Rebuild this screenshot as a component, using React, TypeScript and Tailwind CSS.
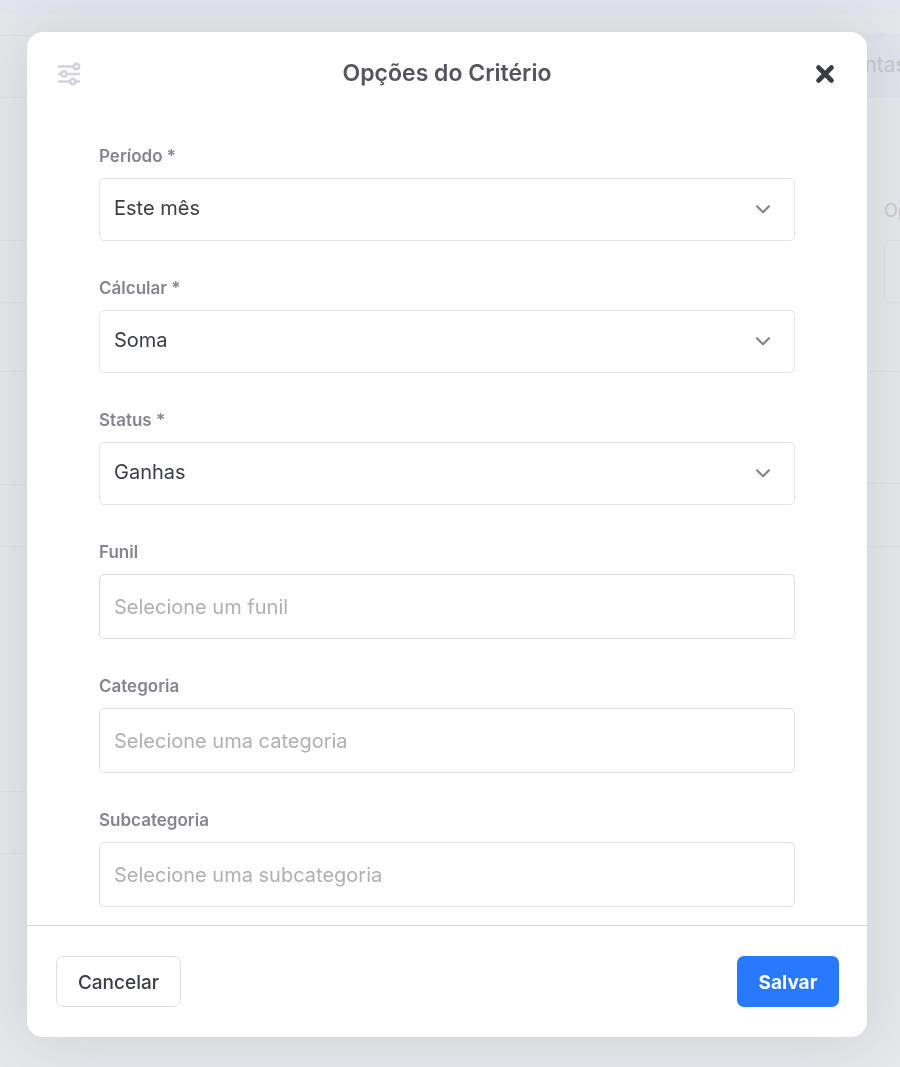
import { useState } from "react";
import type { ReactNode } from "react";

interface FieldProps {
  id: string;
  label: string;
  children: ReactNode;
}

interface SelectFieldProps {
  id: string;
  label: string;
  options: string[];
}

interface TextFieldProps {
  id: string;
  label: string;
  placeholder: string;
}

function Field({ id, label, children }: FieldProps) {
  return (
    <div className="flex flex-col gap-[10px]">
      <label htmlFor={id} className="text-[17px] leading-6 font-semibold text-[#858590]">
        {label}
      </label>
      {children}
    </div>
  );
}

function SelectField({ id, label, options }: SelectFieldProps) {
  const [value, setValue] = useState(options[0]);

  return (
    <Field id={id} label={label}>
      <div className="grid items-center">
        <select
          id={id}
          value={value}
          onChange={(e) => setValue(e.target.value)}
          className="col-start-1 row-start-1 h-[63px] w-full appearance-none rounded-[5px] border border-[#e2e3e6] bg-white px-[14px] pb-1 text-[20px] text-[#3b3d44] outline-none"
        >
          {options.map((option) => (
            <option key={option}>{option}</option>
          ))}
        </select>
        <svg
          viewBox="0 0 16 10"
          className="pointer-events-none col-start-1 row-start-1 mr-6 mb-0.5 h-[10px] w-4 justify-self-end"
          fill="none"
          stroke="#83838e"
          strokeWidth="2.2"
          strokeLinecap="round"
          strokeLinejoin="round"
        >
          <path d="M2 2.2 8 8.2 14 2.2" />
        </svg>
      </div>
    </Field>
  );
}

function TextField({ id, label, placeholder }: TextFieldProps) {
  return (
    <Field id={id} label={label}>
      <input
        id={id}
        type="text"
        placeholder={placeholder}
        className="h-[65px] w-full rounded-[5px] border border-[#dedfe8] bg-white px-[14px] text-[20px] text-[#3b3d44] outline-none placeholder:text-[#b0b0b0]"
      />
    </Field>
  );
}

function SlidersIcon() {
  return (
    <svg viewBox="0 0 24 24" className="size-6" fill="none" stroke="#d3d3de" strokeWidth="2.6">
      <path d="M1 4.5h15.5M1 12h3.5M9.5 12h13.5M1 19.5h12.5M18.5 19.5h4.5" />
      <circle cx="19.5" cy="4.5" r="2.6" />
      <circle cx="7" cy="12" r="2.6" />
      <circle cx="15.8" cy="19.5" r="2.6" />
    </svg>
  );
}

// Dimmed page that stays visible around the modal
function PageBehind() {
  return (
    <div aria-hidden="true" className="min-h-screen bg-[#e6e7eb] text-[#c8c8ce]">
      <div className="h-[14px] bg-[#e4e4f0]" />
      <div className="grid grid-cols-2">
        <div className="flex flex-col pt-[21px]">
          <div className="h-[63px] border-y border-[#dfe0e5]" />
          <div className="mt-[142px] h-[63px] border-y border-[#dfe0e5]" />
          <div className="mt-[68px] h-[113px] border-t border-[#dfe0e5]" />
          <div className="h-[63px] border-y border-[#dfe0e5]" />
          <div className="mt-[244px] h-[63px] border-y border-[#dfe0e5]" />
        </div>
        <div className="flex flex-col pt-[19px]">
          <div className="flex h-[65px] items-center overflow-hidden bg-[#e2e2ec] pb-0.5 pl-[356px] text-[21px]">
            Perguntas
          </div>
          <div className="mt-[101px] ml-[434px] h-6 overflow-hidden text-[18px] leading-6 whitespace-nowrap">
            Opções
          </div>
          <div className="mt-[17px] ml-[434px] h-[63px] rounded-l-md border border-r-0 border-[#dfe0e5]" />
          <div className="mt-[68px] h-[112px] border-t border-[#dedfe6]" />
          <div className="h-16 border-y border-[#dedeea]" />
        </div>
      </div>
    </div>
  );
}

export default function App() {
  const [open, setOpen] = useState(true);

  const handleClose = () => setOpen(false);

  return (
    <div className="font-[Inter,sans-serif]">
      <PageBehind />

      {open && (
        <div className="fixed inset-0 flex pt-8 pr-[33px] pb-[30px] pl-[27px]">
          <form
            role="dialog"
            aria-labelledby="modal-title"
            onSubmit={(e) => e.preventDefault()}
            className="flex min-w-0 flex-1 flex-col overflow-hidden rounded-2xl bg-white shadow-[0_0_60px_rgba(40,40,60,0.12)]"
          >
            <header className="flex h-[84px] shrink-0 items-center justify-between px-[30px]">
              <SlidersIcon />
              <h1 id="modal-title" className="pb-0.5 text-[23px] leading-8 font-semibold text-[#55555f]">
                Opções do Critério
              </h1>
              <button type="button" aria-label="Fechar" onClick={handleClose} className="cursor-pointer">
                <svg
                  viewBox="0 0 24 24"
                  className="size-6"
                  stroke="#3b3d44"
                  strokeWidth="4.6"
                  strokeLinecap="round"
                >
                  <path d="M5.5 5.5l13 13M18.5 5.5l-13 13" />
                </svg>
              </button>
            </header>

            <div className="flex min-h-0 flex-1 flex-col gap-[35px] overflow-y-auto px-[72px] pt-7 pb-4">
              <SelectField id="periodo" label="Período *" options={["Este mês", "Mês passado"]} />
              <SelectField id="calcular" label="Cálcular *" options={["Soma", "Média"]} />
              <SelectField id="status" label="Status *" options={["Ganhas", "Perdidas"]} />
              <TextField id="funil" label="Funil" placeholder="Selecione um funil" />
              <TextField id="categoria" label="Categoria" placeholder="Selecione uma categoria" />
              <TextField id="subcategoria" label="Subcategoria" placeholder="Selecione uma subcategoria" />
            </div>

            <footer className="flex shrink-0 items-center justify-between border-t border-[#d2d3da] py-[30px] pr-7 pl-[29px]">
              <button
                type="button"
                onClick={handleClose}
                className="h-[51px] w-[125px] cursor-pointer rounded-[7px] border border-[#dedee8] bg-white pt-0.5 text-[19px] leading-7 font-medium text-[#3b3d44]"
              >
                Cancelar
              </button>
              <button
                type="submit"
                className="h-[51px] w-[102px] cursor-pointer rounded-[7px] bg-[#2979ff] pt-0.5 text-[19px] leading-7 font-bold text-white"
              >
                Salvar
              </button>
            </footer>
          </form>
        </div>
      )}
    </div>
  );
}
